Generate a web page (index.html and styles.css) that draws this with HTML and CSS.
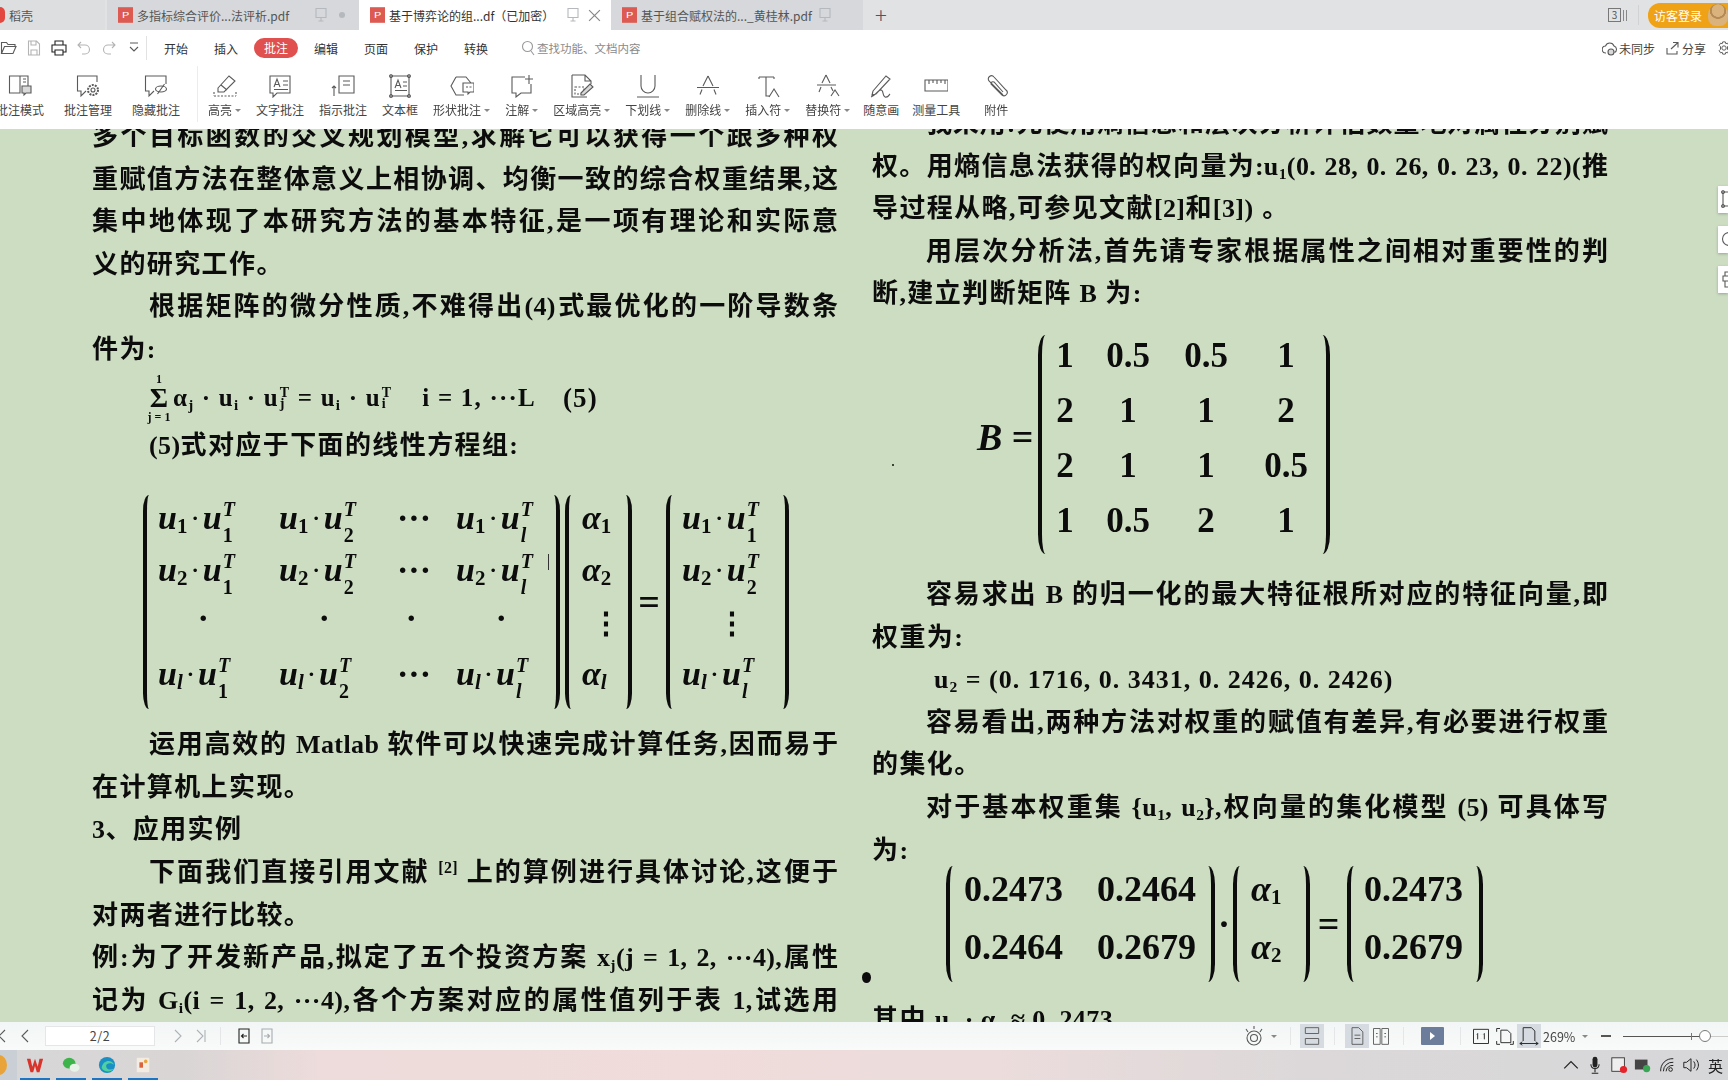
FILE: index.html
```html
<!DOCTYPE html>
<html lang="zh-CN">
<head>
<meta charset="utf-8">
<title>基于博弈论的组合赋权法</title>
<link rel="stylesheet" href="styles.css">
</head>
<body>
<div class="app">
  <header class="tabbar">
    <div class="tab tab-home"><span class="home-logo"></span><span>稻壳</span></div>
    <div class="tab tab-doc"><span class="pdf">P</span><span class="tab-title">多指标综合评价...法评析.pdf</span>
      <svg class="ic tab-mon" viewBox="0 0 14 16"><path d="M2 1.5h10v9H2zM7 10.5v3M4.5 14h5"/></svg><span class="tab-dot"></span></div>
    <div class="tab tab-doc tab-active"><span class="pdf">P</span><span class="tab-title">基于博弈论的组...df（已加密）</span>
      <svg class="ic tab-mon" viewBox="0 0 14 16"><path d="M2 1.5h10v9H2zM7 10.5v3M4.5 14h5"/></svg>
      <svg class="ic tab-x" viewBox="0 0 12 12"><path d="M1 1l10 10M11 1L1 11"/></svg></div>
    <div class="tab tab-doc"><span class="pdf">P</span><span class="tab-title">基于组合赋权法的..._黄桂林.pdf</span>
      <svg class="ic tab-mon" viewBox="0 0 14 16"><path d="M2 1.5h10v9H2zM7 10.5v3M4.5 14h5"/></svg></div>
    <div class="tab-plus">+</div>
    <div class="tab-right">
      <span class="count">3</span><span class="count-bars"></span><span class="vsep"></span>
      <div class="login"><span>访客登录</span><span class="avatar"></span></div>
    </div>
  </header>

  <section class="ribbon">
    <div class="menu-row">
      <div class="qa"><svg class="ic" viewBox="0 0 18 18"><path d="M1.5 14.5V3.5h5l1.500 2h7v2M1.500 14.500h11.500l3-7H4.500z"/></svg></div>
      <div class="qa qa-dim"><svg class="ic" viewBox="0 0 18 18"><path d="M3.500 2h8l3 3v11h-11zM6 2v4h5V2M6 16v-5h6v5"/></svg></div>
      <div class="qa"><svg class="ic ic-dark" viewBox="0 0 18 18"><path d="M5 6V2h8v4M5 13H2V6h14v7h-3M5 11h8v5H5z"/></svg></div>
      <div class="qa qa-dim"><svg class="ic" viewBox="0 0 18 18"><path d="M6 3L3 6l3 3M3 6h7a4 4 0 0 1 0 9H7"/></svg></div>
      <div class="qa qa-dim"><svg class="ic" viewBox="0 0 18 18"><path d="M12 3l3 3-3 3M15 6H8a4 4 0 0 0 0 9h3"/></svg></div>
      <div class="qa"><svg class="ic" viewBox="0 0 18 18"><path d="M5 4h8M5 8l4 4 4-4"/></svg></div>
      <span class="menu-sep"></span>
      <span class="menu-item">开始</span>
      <span class="menu-item">插入</span>
      <span class="menu-pill">批注</span>
      <span class="menu-item">编辑</span>
      <span class="menu-item">页面</span>
      <span class="menu-item">保护</span>
      <span class="menu-item">转换</span>
      <span class="search"><svg class="ic" viewBox="0 0 14 16"><circle cx="6.500" cy="6.500" r="5"/><path d="M10 11l3 4"/></svg>查找功能、文档内容</span>
      <div class="menu-right">
        <span class="mr-item"><svg class="ic" viewBox="0 0 16 16"><path d="M4 13a3.500 3.500 0 0 1-.5-7 4.500 4.500 0 0 1 8.500 0 3.500 3.500 0 0 1 .5 6.500"/><circle class="ic-fill" cx="9" cy="12" r="3"/></svg>未同步</span>
        <span class="mr-item"><svg class="ic" viewBox="0 0 16 16"><path d="M8 2.500h5v5M13 2.500L6 9M2 8v6h10v-3"/></svg>分享</span>
        <svg class="ic mr-gear" viewBox="0 0 16 16"><circle cx="8" cy="8" r="2.500"/><path d="M6.500 1h3l.5 2 2-.5 1.500 2.500L12 6.500v3l1.500 1.500-1.500 2.500-2-.5-.5 2h-3l-.5-2-2 .5L2.500 11 4 9.500v-3L2.500 5 4 2.500l2 .5z"/></svg>
      </div>
    </div>

    <div class="tool-row">
      <div class="tools tools-a">
        <div class="tool"><svg class="ic" viewBox="0 0 24 24"><path d="M1.500 2H12V19H1.500zM12 2h8v10M15 5h3M15 8h3"/><path class="ic-fill" d="M14 12h9v7h-5l-2 2v-2h-2z"/></svg><span>批注模式</span></div>
        <div class="tool"><svg class="ic" viewBox="0 0 24 24"><path d="M1.500 9V2H21v6M1.500 9v8H5v5l5-5"/><circle cx="17" cy="16" r="2"/><circle class="gear" cx="17" cy="16" r="5"/></svg><span>批注管理</span></div>
        <div class="tool"><svg class="ic" viewBox="0 0 24 24"><path d="M1.500 9V2H22v8M1.500 9v8H5v5l5-5"/><ellipse cx="17" cy="15" rx="5.500" ry="3"/><path d="M13.500 20l7-10"/></svg><span>隐藏批注</span></div>
      </div>
      <span class="tool-sep"></span>
      <div class="tools tools-b">
        <div class="tool"><svg class="ic" viewBox="0 0 24 24"><path d="M5 14L16 2l6 5-11 11H5zM8 11l6 5"/><path class="dash" d="M1 22h22M1 18v4M23 18v4"/></svg><span class="car">高亮</span></div>
        <div class="tool"><svg class="ic" viewBox="0 0 24 24"><path d="M2 2h20v17H9l-4 4v-4H2zM6 13l3-8 3 8M7 10.500h4M15 7h5M15 11h5M6 15.500h14"/></svg><span>文字批注</span></div>
        <div class="tool"><svg class="ic" viewBox="0 0 24 24"><path d="M8 19V2h15v17zM3 22V12M1 14l2-2 2 2M12 7h7M12 11h7"/></svg><span>指示批注</span></div>
        <div class="tool"><svg class="ic" viewBox="0 0 24 24"><path d="M3 2h18v20H3zM7 14l3-8 3 8M8 11.500h4M15 8h4M15 12h4M7 16.500h12"/><circle class="ic-dot" cx="3" cy="2" r="1.300"/><circle class="ic-dot" cx="21" cy="2" r="1.300"/><circle class="ic-dot" cx="3" cy="22" r="1.300"/><circle class="ic-dot" cx="21" cy="22" r="1.300"/></svg><span>文本框</span></div>
        <div class="tool"><svg class="ic" viewBox="0 0 24 24"><path d="M6 3h10l5 6M14 21H6l-5-9 5-9M13 9h11v9h-4l-2 2v-2h-5z"/><path class="dash" d="M16 13h6" /></svg><span class="car">形状批注</span></div>
        <div class="tool"><svg class="ic" viewBox="0 0 24 24"><path d="M15 3H2v16h4v4l5-4h10v-9M19 1v9M15 5h8"/></svg><span class="car">注解</span></div>
        <div class="tool"><svg class="ic" viewBox="0 0 24 24"><path d="M2 1h13l6 6v3M15 1v6h6M2 1v22h15M2 23"/><path class="dash" d="M5 13h9v7H5z"/><path class="ic-fill" d="M11 19l9-9 3 3-9 8h-3z"/></svg><span class="car">区域高亮</span></div>
        <div class="tool"><svg class="ic" viewBox="0 0 24 24"><path d="M5 1v11a7 7 0 0 0 14 0V1M1 23h22"/></svg><span class="car">下划线</span></div>
        <div class="tool"><svg class="ic" viewBox="0 0 24 24"><path d="M12 2L7 12M12 2l5 10M1 13.500h22M6 15.500l-2 5M18 15.500l2 5"/></svg><span class="car">删除线</span></div>
        <div class="tool"><svg class="ic" viewBox="0 0 24 24"><path d="M3 3h15M10 3v19h4M13 23l5-8 5 8"/><path d="M3 3v2M18 3v2"/></svg><span class="car">插入符</span></div>
        <div class="tool"><svg class="ic" viewBox="0 0 24 24"><path d="M10 1L6 9M10 1l4 8M1 11h19M5 13l-2 5M15 13l2 4M15 22l4-6 4 6"/></svg><span class="car">替换符</span></div>
        <div class="tool tool-nc"><svg class="ic" viewBox="0 0 24 24"><path d="M4 17L17 2l4 3L7 20l-4 1zM2 23c4-1 7-7 10-7s1 6 4 7 4-2 5-3"/></svg><span>随意画</span></div>
        <div class="tool tool-nc"><svg class="ic" viewBox="0 0 24 24"><path d="M1 6h23v11H1zM5 6v4M9 6v3M13 6v4M17 6v3M21 6v4"/></svg><span>测量工具</span></div>
        <div class="tool tool-nc tool-last"><svg class="ic" viewBox="0 0 24 24"><path d="M19 21L5 7a3 3 0 0 1 5-4l12 13a3 3 0 0 1-4 5 L7 10a2 2 0 0 1 3-2l9 10"/></svg><span>附件</span></div>
      </div>
    </div>
  </section>

  <main class="doc">
    <div class="page">
      <article class="col col-left">
        <p class="ln">多个目标函数的交叉规划模型,求解它可以获得一个跟多种权</p>
        <p class="ln">重赋值方法在整体意义上相协调、均衡一致的综合权重结果,这</p>
        <p class="ln">集中地体现了本研究方法的基本特征,是一项有理论和实际意</p>
        <p class="sh">义的研究工作。</p>
        <p class="ln in">根据矩阵的微分性质,不难得出<span class="la">(4)</span>式最优化的一阶导数条</p>
        <p class="sh">件为:</p>
        <div class="sumline">
          <span class="sigma"><small>1</small><b>Σ</b><small>j = 1</small></span>
          <span>α<sub>j</sub> · u<sub>i</sub> · u<span class="ss ss-s"><sup>T</sup><sub>j</sub></span> = u<sub>i</sub> · u<span class="ss ss-s"><sup>T</sup><sub>i</sub></span></span>
          <span class="sum-i">i = 1, ···L</span>
          <span class="sum-n">(5)</span>
        </div>
        <p class="sh in2"><span class="la">(5)</span>式对应于下面的线性方程组:</p>
        <div class="eq eq-main">
          <span class="par par-l"></span>
          <div class="mtx mtx-u">
            <span class="m"><i>u</i><sub>1</sub><b>·</b><i>u</i><span class="ss"><sup>T</sup><sub>1</sub></span></span>
            <span class="m"><i>u</i><sub>1</sub><b>·</b><i>u</i><span class="ss"><sup>T</sup><sub>2</sub></span></span>
            <span class="m">···</span>
            <span class="m"><i>u</i><sub>1</sub><b>·</b><i>u</i><span class="ss"><sup>T</sup><sub><i>l</i></sub></span></span>
            <span class="m"><i>u</i><sub>2</sub><b>·</b><i>u</i><span class="ss"><sup>T</sup><sub>1</sub></span></span>
            <span class="m"><i>u</i><sub>2</sub><b>·</b><i>u</i><span class="ss"><sup>T</sup><sub>2</sub></span></span>
            <span class="m">···</span>
            <span class="m"><i>u</i><sub>2</sub><b>·</b><i>u</i><span class="ss"><sup>T</sup><sub><i>l</i></sub></span></span>
            <span class="m m-dot">.</span><span class="m m-dot">.</span><span class="m m-dot m-dot3">.</span><span class="m m-dot">.</span>
            <span class="m"><i>u</i><sub><i>l</i></sub><b>·</b><i>u</i><span class="ss"><sup>T</sup><sub>1</sub></span></span>
            <span class="m"><i>u</i><sub><i>l</i></sub><b>·</b><i>u</i><span class="ss"><sup>T</sup><sub>2</sub></span></span>
            <span class="m">···</span>
            <span class="m"><i>u</i><sub><i>l</i></sub><b>·</b><i>u</i><span class="ss"><sup>T</sup><sub><i>l</i></sub></span></span>
          </div>
          <span class="par par-r"></span>
          <span class="par par-l par-gap"></span>
          <div class="mtx mtx-a">
            <span class="m"><i>α</i><sub>1</sub></span>
            <span class="m"><i>α</i><sub>2</sub></span>
            <span class="m m-v">⋮</span>
            <span class="m"><i>α</i><sub><i>l</i></sub></span>
          </div>
          <span class="par par-r"></span>
          <span class="eqs">=</span>
          <span class="par par-l"></span>
          <div class="mtx mtx-c">
            <span class="m"><i>u</i><sub>1</sub><b>·</b><i>u</i><span class="ss"><sup>T</sup><sub>1</sub></span></span>
            <span class="m"><i>u</i><sub>2</sub><b>·</b><i>u</i><span class="ss"><sup>T</sup><sub>2</sub></span></span>
            <span class="m m-v">⋮</span>
            <span class="m"><i>u</i><sub><i>l</i></sub><b>·</b><i>u</i><span class="ss"><sup>T</sup><sub><i>l</i></sub></span></span>
          </div>
          <span class="par par-r"></span>
        </div>
        <p class="ln in">运用高效的 <span class="la">Matlab</span> 软件可以快速完成计算任务,因而易于</p>
        <p class="sh">在计算机上实现。</p>
        <p class="sh"><span class="la">3</span>、应用实例</p>
        <p class="ln in">下面我们直接引用文献 <span class="la cite">[2]</span> 上的算例进行具体讨论,这便于</p>
        <p class="sh">对两者进行比较。</p>
        <p class="ln">例:为了开发新产品,拟定了五个投资方案 <span class="la">x<sub>j</sub>(j = 1, 2, ···4)</span>,属性</p>
        <p class="ln">记为 <span class="la">G<sub>i</sub>(i = 1, 2, ···4)</span>,各个方案对应的属性值列于表 <span class="la">1</span>,试选用</p>
      </article>

      <article class="col col-right">
        <p class="ln in">我采用:先使用熵信息和层次分析评估数量地对属性分别赋</p>
        <p class="ln">权。用熵信息法获得的权向量为:<span class="la">u<sub>1</sub>(0. 28, 0. 26, 0. 23, 0. 22)</span>(推</p>
        <p class="sh">导过程从略,可参见文献<span class="la">[2]</span>和<span class="la">[3]</span>) 。</p>
        <p class="ln in">用层次分析法,首先请专家根据属性之间相对重要性的判</p>
        <p class="sh">断,建立判断矩阵 <span class="la">B</span> 为:</p>
        <div class="eq eq-b">
          <span class="eq-lhs"><i>B</i> =</span>
          <span class="par par-l"></span>
          <div class="mtx mtx-b">
            <span>1</span><span>0.5</span><span>0.5</span><span>1</span>
            <span>2</span><span>1</span><span>1</span><span>2</span>
            <span>2</span><span>1</span><span>1</span><span>0.5</span>
            <span>1</span><span>0.5</span><span>2</span><span>1</span>
          </div>
          <span class="par par-r"></span>
        </div>
        <p class="ln in">容易求出 <span class="la">B</span> 的归一化的最大特征根所对应的特征向量,即</p>
        <p class="sh">权重为:</p>
        <p class="sh in3"><span class="la lat">u<sub>2</sub> = (0. 1716, 0. 3431, 0. 2426, 0. 2426)</span></p>
        <p class="ln in">容易看出,两种方法对权重的赋值有差异,有必要进行权重</p>
        <p class="sh">的集化。</p>
        <p class="ln in">对于基本权重集 <span class="la">{u<sub>1</sub>, u<sub>2</sub>}</span>,权向量的集化模型 <span class="la">(5)</span> 可具体写</p>
        <p class="sh">为:</p>
        <div class="eq eq-2">
          <span class="par par-l"></span>
          <div class="mtx mtx-2">
            <span>0.2473</span><span>0.2464</span>
            <span>0.2464</span><span>0.2679</span>
          </div>
          <span class="par par-r"></span>
          <span class="eq-dot">·</span>
          <span class="par par-l"></span>
          <div class="mtx mtx-2a"><span class="m"><i>α</i><sub>1</sub></span><span class="m"><i>α</i><sub>2</sub></span></div>
          <span class="par par-r"></span>
          <span class="eqs eqs-2">=</span>
          <span class="par par-l"></span>
          <div class="mtx mtx-2c"><span>0.2473</span><span>0.2679</span></div>
          <span class="par par-r"></span>
        </div>
        <p class="sh">其中 <span class="la">u<sub>1</sub> · α<sub>1</sub> ≈ 0. 2473</span></p>
      </article>
    </div>
    <span class="speck speck-a"></span>
    <span class="speck speck-b"></span>
    <span class="ibeam"></span>
    <div class="side">
      <span class="side-btn"><svg class="ic" viewBox="0 0 16 20"><path d="M3 3h10v14H3z"/><circle class="ic-dot" cx="3" cy="3" r="1.300"/><circle class="ic-dot" cx="3" cy="17" r="1.300"/></svg></span>
      <span class="side-btn"><svg class="ic" viewBox="0 0 16 20"><circle cx="9" cy="10" r="6.500"/></svg></span>
      <span class="side-btn"><svg class="ic" viewBox="0 0 16 20"><path d="M5 3h9v4H5zM3 7h11v5H3zM5 12h6v6H5z"/></svg></span>
    </div>
  </main>

  <footer class="statusbar">
    <div class="sb-left">
      <svg class="ic nav nav-first" viewBox="0 0 10 16"><path d="M8 2L2 8l6 6"/></svg>
      <svg class="ic nav nav-prev" viewBox="0 0 10 16"><path d="M8 2L2 8l6 6"/></svg>
      <span class="pagebox">2/2</span>
      <svg class="ic nav nav-dim" viewBox="0 0 10 16"><path d="M2 2l6 6-6 6"/></svg>
      <svg class="ic nav nav-dim nav-last" viewBox="0 0 10 16"><path d="M1 2l6 6-6 6M9 2v12"/></svg>
      <span class="sb-sep"></span>
      <span class="arrowbox"><svg class="ic ic-dark" viewBox="0 0 14 16"><path d="M2 1h10v14H2zM10 8H4.500M6.500 6L4.500 8l2 2"/></svg></span>
      <span class="arrowbox arrowbox-dim"><svg class="ic" viewBox="0 0 14 16"><path d="M2 1h10v14H2zM4 8h5.500M7.500 6l2 2-2 2"/></svg></span>
    </div>
    <div class="sb-right">
      <svg class="ic sb-eye" viewBox="0 0 24 24"><circle cx="12" cy="14" r="7"/><circle cx="12" cy="14" r="3.500"/><path d="M12 2v3M4 5l2 3M20 5l-2 3"/></svg>
      <span class="caret"></span>
      <span class="sb-sep sb-sep-a"></span>
      <span class="sb-on"><svg class="ic" viewBox="0 0 24 24"><path d="M4 2h16M4 22h16M4 2v7h16V2M4 22v-7h16v7"/></svg></span>
      <span class="sb-sep"></span>
      <span class="sb-on"><svg class="ic" viewBox="0 0 24 24"><path d="M6 2h8l5 5v15H6zM9 11h7M9 15h7"/></svg></span>
      <span class="sb-btn"><svg class="ic" viewBox="0 0 24 24"><path d="M3 3h8v19H3zM13 3h8v19h-8zM6 9h2M6 13h2M16 9h2M16 13h2"/></svg></span>
      <span class="sb-sep"></span>
      <span class="play"></span>
      <span class="sb-sep sb-sep-b"></span>
      <span class="sb-btn"><svg class="ic ic-dark" viewBox="0 0 24 24"><path d="M3 4h18v17H3zM8 9v7M7 10l1-1M16 9v7M15 10l1-1M12 10.500v.1M12 14.500v.1"/></svg></span>
      <span class="sb-btn"><svg class="ic ic-dark" viewBox="0 0 24 24"><path d="M7 5h8l4 4v11H7zM2 7V3h4M2 18v4h4M22 18v4h-4"/></svg></span>
      <span class="sb-on"><svg class="ic ic-dark" viewBox="0 0 24 24"><path d="M5 18V2h10l4 4v12M1 21h22M1 21l3-2M1 21l3 2M23 21l-3-2M23 21l-3 2"/></svg></span>
      <span class="zoomval">269%</span>
      <span class="caret caret-z"></span>
      <span class="minus"></span>
      <div class="slider"><span class="tick"></span><span class="knob"></span></div>
    </div>
  </footer>

  <nav class="taskbar">
    <div class="tb-apps">
      <span class="tb-app tb-active"><span class="tb-ball"></span></span>
      <span class="tb-app tb-wps"><svg viewBox="0 0 20 20"><path class="wps" d="M1 3h4l2 9 3-9 3 9 2-9h4l-4 15h-3l-2-7-2 7H5z"/></svg></span>
      <span class="tb-app"><svg viewBox="0 0 20 20"><ellipse class="wc1" cx="8" cy="8" rx="7" ry="6"/><ellipse class="wc2" cx="14" cy="13" rx="5.500" ry="4.500"/></svg></span>
      <span class="tb-app"><svg viewBox="0 0 20 20"><circle class="ed1" cx="10" cy="10" r="9"/><path class="ed2" d="M4 13c2 5 10 6 14 1-4 2-9 1-9-3 0-3 6-4 9-1C16 4 6 3 4 13z"/></svg></span>
      <span class="tb-app"><svg viewBox="0 0 20 20"><rect class="pp1" x="3" y="2" width="14" height="16" rx="1"/><rect class="pp2" x="6" y="7" width="4" height="6"/><circle class="pp3" cx="13" cy="6" r="2"/></svg></span>
    </div>
    <div class="tray">
      <svg class="ic ic-dark" viewBox="0 0 16 16"><path d="M2 11l6-6 6 6"/></svg>
      <svg class="tray-solid" viewBox="0 0 16 22"><rect x="5" y="1" width="6" height="13" rx="3"/><path d="M3 10c0 7 10 7 10 0M8 16v4M4 21h8" class="tray-line"/></svg>
      <svg viewBox="0 0 20 20"><rect class="tr-a" x="2" y="2" width="14" height="15"/><circle class="tr-r" cx="15" cy="15" r="4"/></svg>
      <svg viewBox="0 0 20 20"><rect class="tr-b" x="1" y="4" width="14" height="11"/><circle class="tr-g" cx="14" cy="14" r="4"/></svg>
      <svg class="ic ic-dark" viewBox="0 0 20 20"><path d="M3 17A13 13 0 0 1 17 3M6 17A10 10 0 0 1 17 7M9 17a7 7 0 0 1 8-6.500"/><circle class="ic-fill" cx="14" cy="15" r="2"/></svg>
      <svg class="ic ic-dark" viewBox="0 0 20 20"><path d="M2 7v6h3l5 4V3L5 7zM13 6c2 3 2 5 0 8M16 4c3 4 3 8 0 12"/></svg>
      <span class="tray-lang">英</span>
    </div>
  </nav>
</div>
</body>
</html>
```
FILE: styles.css
```css
* { box-sizing: border-box; }
html, body { margin: 0; padding: 0; }
body { width: 1728px; height: 1080px; overflow: hidden; background: #fff; font-family: "Noto Sans CJK SC", "Noto Sans", sans-serif; color: #444; }
.app { width: 1728px; height: 1080px; display: flex; flex-direction: column; overflow: hidden; filter: blur(.3px); }

.ic { fill: none; stroke: #5a5a5a; stroke-width: 1.1; display: block; }
.ic-dark { stroke: #222; }
.ic-fill { fill: #d9d9d9; }
.ic-dot { fill: #fff; stroke: #333; }
.dash { stroke-dasharray: 2 1.500; }
.gear { stroke-dasharray: 2 1.100; stroke-width: 2; }

/* tab bar */
.tabbar { height: 30px; flex: none; display: flex; background: #e0e2e3; font-size: 12px; color: #555; }
.tab { height: 30px; display: flex; align-items: center; background: #d6d8dc; }
.tab-home { width: 105px; margin-right: 2px; background: #dcdee0; }
.home-logo { width: 5px; height: 16px; margin-right: 4px; border-radius: 0 8px 8px 0; background: #e2483f; }
.tab-doc { width: 252px; padding-left: 11px; position: relative; }
.tab-active { background: #fff; color: #333; }
.pdf { width: 15px; height: 26px; margin-right: 4px; background: #dd5a53; color: #fff; font-size: 12px; line-height: 26px; text-align: center; transform: scaleY(.6); flex: none; }
.tab-title { white-space: nowrap; }
.tab-mon { width: 14px; height: 16px; position: absolute; left: 207px; stroke: #b5b8bc; }
.tab-dot { position: absolute; left: 232px; width: 6px; height: 6px; border-radius: 50%; background: #b5b8bc; }
.tab-x { position: absolute; left: 229px; width: 13px; height: 13px; stroke: #888; }
.tab-plus { width: 36px; height: 30px; text-align: center; font-size: 22px; font-weight: 300; line-height: 28px; color: #4a5568; }
.tab-right { margin-left: auto; display: flex; align-items: center; }
.count { width: 13px; height: 14px; border: 1px solid #777; font-size: 10px; line-height: 12px; text-align: center; }
.count-bars { width: 4px; height: 11px; margin-left: 2px; border-left: 1px solid #888; border-right: 1px solid #888; }
.vsep { width: 1px; height: 20px; margin: 0 9px 0 11px; background: #d0d2d4; }
.login { width: 80px; height: 25px; display: flex; align-items: center; justify-content: flex-start; padding-left: 6px; border-radius: 12px 0 0 12px; background: #f0a216; color: #fff; font-size: 12px; }
.avatar { width: 20px; height: 22px; margin-left: 6px; border-radius: 50% 50% 40% 40%; background: radial-gradient(circle at 50% 30%, #d9b27c 0 6px, #b58a55 6.500px 8px, #d9b27c 8.500px); }

/* ribbon */
.ribbon { height: 99px; flex: none; background: #fff; display: flex; flex-direction: column; }
.menu-row { height: 32px; flex: none; padding-top: 4px; display: flex; align-items: center; font-size: 12px; color: #333; }
.qa { width: 25px; display: flex; justify-content: center; }
.qa:first-child { margin-left: -4px; }
.qa svg { width: 18px; height: 18px; }
.qa-dim svg { stroke: #b4b4b4; }
.menu-sep { width: 1px; height: 24px; margin-right: 4px; background: #e2e2e2; }
.menu-item { width: 50px; text-align: center; white-space: nowrap; }
.menu-pill { width: 44px; height: 20px; margin: 0 3px; border-radius: 10px; background: #e0504f; color: #fff; text-align: center; line-height: 20px; }
.search { display: flex; align-items: center; gap: 2px; margin-left: 20px; color: #8a8a8a; font-size: 11.500px; }
.search svg { width: 14px; height: 16px; stroke: #9a9a9a; }
.menu-right { margin-left: auto; display: flex; align-items: center; gap: 10px; margin-right: -3px; color: #444; }
.mr-item { display: flex; align-items: center; gap: 1px; white-space: nowrap; }
.mr-item svg { width: 16px; height: 16px; }
.mr-gear { width: 14px; height: 16px; margin-left: 1px; }

.tool-row { flex: 1; display: flex; padding-top: 12px; }
.tools { display: flex; align-items: flex-start; }
.tools-a { gap: 20px; margin-left: -4px; }
.tools-b { gap: 15px; }
.tool { display: flex; flex-direction: column; align-items: center; font-size: 12px; line-height: 16px; white-space: nowrap; color: #444; }
.tool svg { width: 24px; height: 24px; margin-bottom: 4px; }
.tool .car { padding-right: 9px; position: relative; }
.tool .car::after { content: ""; position: absolute; right: 0; top: 7px; border: 3px solid transparent; border-top-color: #888; border-bottom: 0; }
.tool-sep { width: 1px; height: 56px; margin: -8px 10px 0 17px; background: #ececec; }
.tool-nc { margin-left: -2px; }
.tool-last { margin-left: 9px; }

/* document */
.doc { flex: 1; min-height: 0; position: relative; overflow: hidden; background: #ccddc2; color: #0c0c0c; font-family: "Liberation Serif", "Noto Sans CJK SC", serif; font-size: 26px; font-weight: 700; }
.page { display: flex; padding-left: 92px; gap: 34px; }
.col { flex: none; letter-spacing: 1.400px; }
.col-left { width: 746px; margin-top: -13px; }
.col-right { width: 736px; margin-top: -26px; }
.col p { margin: 0; height: 42.600px; line-height: 42.600px; white-space: nowrap; }
.col .ln { text-align: justify; text-align-last: justify; white-space: normal; letter-spacing: 0; overflow: hidden; }
.in { padding-left: 57px; }
.col-right .in { padding-left: 54px; }
.in2 { padding-left: 57px; }
.in3 { padding-left: 62px; }
.la { font-family: "Liberation Serif", serif; font-weight: 700; letter-spacing: .4px; }
.lat { letter-spacing: 1px; }
.cite { font-size: 16px; position: relative; top: -8px; }
.doc sub { font-size: .6em; line-height: 0; vertical-align: -.25em; }

.sumline { height: 53px; display: flex; align-items: center; padding-left: 57px; font-family: "Liberation Serif", serif; font-weight: 700; font-size: 25px; letter-spacing: 1.200px; white-space: nowrap; }
.sigma { width: 20px; display: flex; flex-direction: column; align-items: center; line-height: 1; margin-right: 4px; letter-spacing: 0; }
.sigma small { font-size: 12px; line-height: 12px; white-space: nowrap; }
.sigma b { font-size: 28px; line-height: 26px; }
.sum-i { margin-left: 30px; }
.sum-n { margin-left: 27px; font-size: 27px; }
.ss { display: inline-flex; flex-direction: column; vertical-align: middle; line-height: 16px; font-size: 20px; margin-left: 1px; }
.ss sup, .ss sub, .doc .ss sub { font-size: 20px; line-height: 19px; vertical-align: baseline; }
.ss sup { font-style: italic; margin-bottom: -1px; }
.ss-s sup, .doc .ss-s sub { font-size: 14px; line-height: 12px; font-style: normal; }
.ss-s { margin-top: -4px; }

.eq { display: flex; font-family: "Liberation Serif", serif; font-weight: 700; letter-spacing: 0; }
.par { flex: none; width: 13px; border-left: 4px solid #0c0c0c; border-radius: 13px / 34px; }
.par-r { border-left: 0; border-right: 4px solid #0c0c0c; }
.mtx { display: grid; align-items: center; white-space: nowrap; }
.m { display: inline-flex; align-items: center; }
.m i { font-style: italic; }
.m b { font-weight: 700; margin: 0 4px; font-size: 22px; }
.m sub { font-size: 21px; position: relative; top: 8px; line-height: 1; vertical-align: baseline; }

.eq-main { height: 214px; margin: 28px 0 15px 51px; font-size: 34px; }
.eq-main .par { width: 12px; }
.mtx-u { width: 393px; padding-left: 3px; grid-template-columns: 121px 118px 59px 92px; grid-auto-rows: 52px; margin-top: -3px; }
.par-gap { margin-left: 5px; }
.mtx-a { width: 43px; grid-auto-rows: 52px; margin-top: -3px; padding-left: 5px; }
.eqs { width: 34px; text-align: center; align-self: center; font-size: 38px; }
.mtx-c { width: 99px; grid-auto-rows: 52px; margin-top: -3px; padding-left: 4px; }
.m-dot { padding-left: 41px; font-size: 34px; position: relative; top: -12px; }
.m-dot3 { padding-left: 10px; }
.m-v { padding-left: 9px; font-size: 30px; }
.mtx-c .m-v { padding-left: 35px; }

.eq-b { height: 219px; margin: 19px 0 20px 0; padding-left: 105px; font-size: 35px; }
.eq-lhs { width: 61px; align-self: center; font-size: 38px; white-space: nowrap; margin-top: -15px; }
.mtx-b { width: 262px; grid-template-columns: 24px 102px 54px 106px; grid-auto-rows: 55px; margin-top: -6px; }
.eq-b .par { width: 15px; }
.mtx-b span { text-align: center; }

.eq-2 { height: 116px; margin: -6px 0 17px 74px; font-size: 36px; }
.eq-2 .par { width: 14px; }
.mtx-2 { width: 241px; padding-left: 4px; grid-template-columns: 133px 98px; grid-auto-rows: 58px; margin-top: -6px; }
.eq-dot { width: 18px; align-self: center; text-align: center; }
.mtx-2a { width: 49px; grid-auto-rows: 58px; padding-left: 4px; margin-top: -6px; }
.eqs-2 { width: 37px; }
.mtx-2c { width: 108px; grid-auto-rows: 58px; padding-left: 3px; margin-top: -6px; }

.speck { position: absolute; background: #0c0c0c; border-radius: 50%; }
.speck-a { left: 892px; top: 335px; width: 2px; height: 2px; }
.speck-b { left: 862px; top: 843px; width: 9px; height: 11px; }
.ibeam { position: absolute; left: 547px; top: 425px; width: 3px; height: 16px; border-left: 1px solid #333; margin-left: 1px; }
.side { position: absolute; right: 0; top: 57px; display: flex; flex-direction: column; gap: 13px; }
.side-btn { width: 10px; height: 27px; background: #fff; overflow: hidden; padding: 3px 0 0 2px; box-shadow: 0 1px 3px rgba(0,0,0,.25); }
.side-btn svg { width: 16px; height: 20px; }

/* status bar */
.statusbar { height: 28px; flex: none; display: flex; align-items: center; background: linear-gradient(#f3f6f6, #f9fafa); font-size: 13px; color: #444; }
.sb-left { display: flex; align-items: center; }
.nav { width: 10px; height: 16px; }
.nav-first { margin-left: -3px; }
.nav-prev { margin-left: 13px; }
.nav-dim { stroke: #aeb2b6; margin-left: 18px; }
.nav-last { margin-left: 13px; }
.pagebox { width: 110px; height: 20px; margin-left: 15px; background: #fff; border: 1px solid #e4e6e8; text-align: center; line-height: 18px; font-size: 12.500px; letter-spacing: .5px; }
.sb-sep { width: 1px; height: 18px; margin: 0 10px; background: #e4e6e8; flex: none; }
.sb-left .sb-sep { margin: 0 16px 0 14px; }
.arrowbox { width: 14px; margin-right: 9px; }
.arrowbox svg { width: 14px; height: 16px; }
.arrowbox-dim svg { stroke: #a8acb0; }
.sb-right { margin-left: auto; display: flex; align-items: center; }
.sb-eye { width: 24px; height: 24px; }
.caret { width: 0; height: 0; margin-left: 5px; border: 3px solid transparent; border-top-color: #888; border-bottom: 0; }
.sb-sep-a { margin: 0 9px 0 13px; }
.sb-on, .sb-btn { width: 24px; height: 24px; display: flex; align-items: center; justify-content: center; flex: none; }
.sb-on { background: #d5dbe1; }
.sb-on svg, .sb-btn svg { width: 20px; height: 20px; }
.play { width: 23px; height: 18px; margin: 0 16px 0 7px; border-radius: 1px; background: #6c7d9c; position: relative; }
.play::after { content: ""; position: absolute; left: 9px; top: 5px; border: 4px solid transparent; border-left: 5px solid #fff; border-right: 0; }
.sb-sep-b { margin: 0 8px 0 0; }
.zoomval { width: 36px; margin-left: 2px; font-size: 12.500px; white-space: nowrap; }
.caret-z { margin-left: 3px; }
.minus { width: 10px; height: 2px; margin-left: 13px; background: #555; }
.slider { width: 105px; height: 1px; margin-left: 12px; background: linear-gradient(90deg, #555 0 78px, #ccc 78px); position: relative; }
.tick { position: absolute; left: 68px; top: -3px; width: 1px; height: 7px; background: #777; }
.knob { position: absolute; left: 76px; top: -6px; width: 12px; height: 12px; border-radius: 50%; border: 1px solid #777; background: #fff; }

/* taskbar */
.taskbar { height: 30px; flex: none; display: flex; align-items: center; background: linear-gradient(90deg, #d7d7d7 0, #d9d5d5 180px, #eddcdb 320px, #efdcdb 700px, #ecdcdc 1000px, #dcd8d9 1300px, #d6d7d9 1728px); }
.tb-apps { display: flex; height: 30px; }
.tb-app { width: 36px; height: 30px; display: flex; align-items: center; justify-content: center; position: relative; }
.tb-app::after { content: ""; position: absolute; left: 3px; right: 3px; bottom: 0; height: 2px; background: #1b74c4; }
.tb-app:first-child::after { display: none; }
.tb-app svg { width: 18px; height: 18px; }
.tb-active { width: 17px; background: #c9cfd4; overflow: hidden; justify-content: flex-start; }
.tb-ball { width: 16px; height: 20px; margin-left: -9px; border-radius: 50%; background: #e8a43a; flex: none; }
.wps { fill: #d8342c; }
.wc1 { fill: #3cb44a; }
.wc2 { fill: #e8f3e8; }
.ed1 { fill: #1a8fc4; }
.ed2 { fill: #50d0a0; }
.pp1 { fill: #f3ece2; }
.pp2 { fill: #d9643c; }
.pp3 { fill: #e8a43a; }
.tray { margin-left: auto; display: flex; align-items: center; gap: 6px; padding-right: 5px; }
.tray svg { width: 18px; height: 18px; flex: none; }
.tray-solid rect { fill: #222; }
.tray-line { fill: none; stroke: #222; stroke-width: 1.300; }
.tr-a { fill: #eee; stroke: #333; }
.tr-r { fill: #e3242b; }
.tr-b { fill: #444; }
.tr-g { fill: #3aa655; }
.tray-lang { font-size: 15px; color: #222; margin-left: 2px; }
```
